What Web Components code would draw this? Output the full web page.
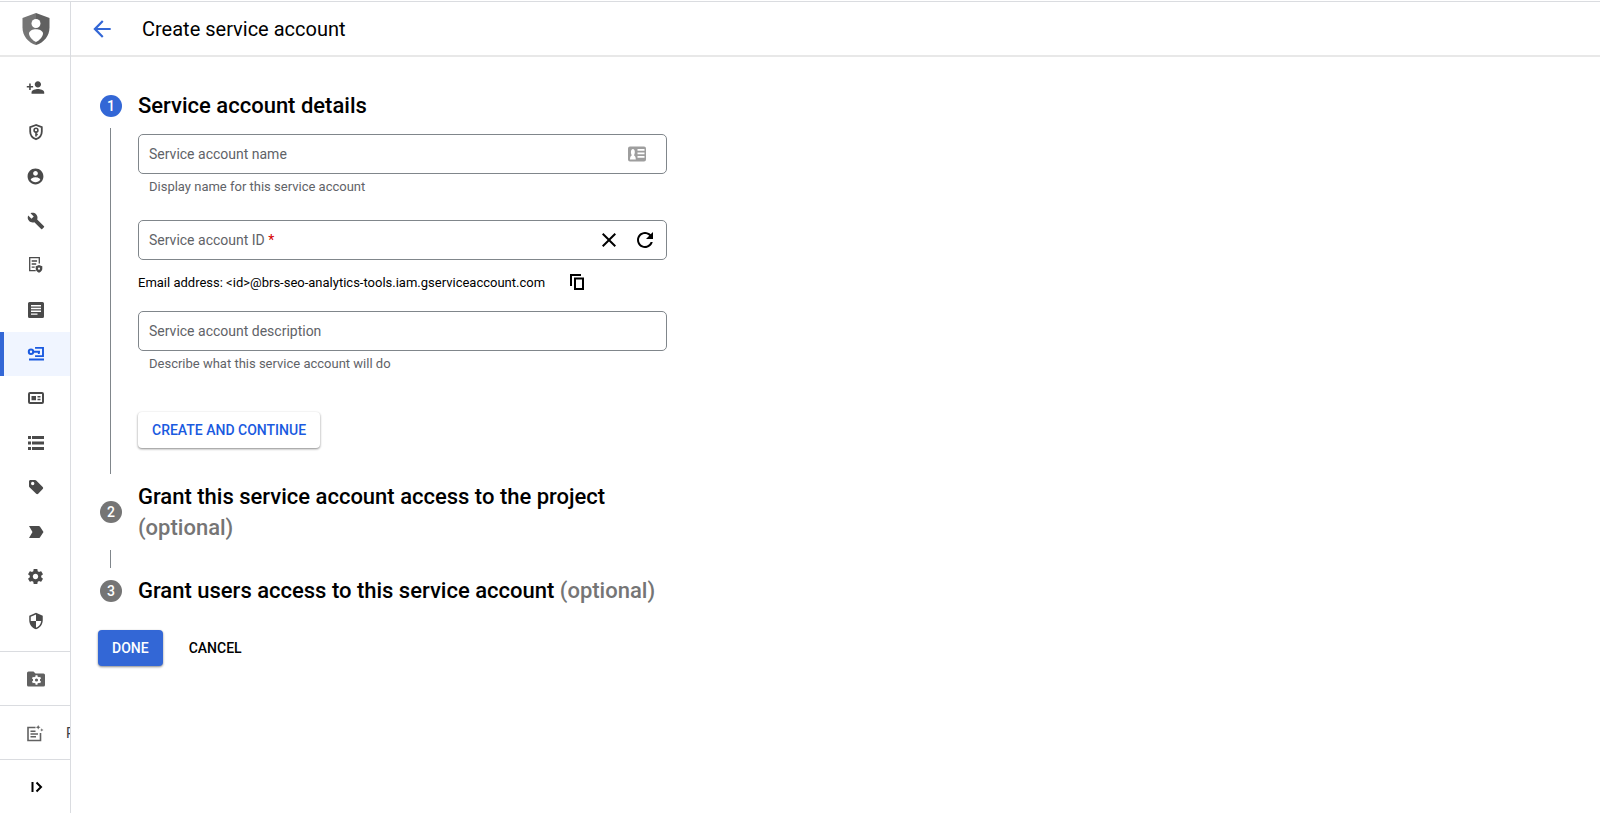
<!DOCTYPE html>
<html lang="en">
<head>
<meta charset="utf-8">
<meta name="viewport" content="width=device-width, initial-scale=1">
<title>Create service account</title>
<style>
  html, body { margin: 0; }
  body { font-family: Roboto, "Liberation Sans", sans-serif; color: #000; background: #fff; }
</style>
</head>
<body>
<iam-app></iam-app>

<script>
const ICONS = {
  product: [32, '0 0 32 32', '<path fill="#757575" d="M16 0 2.500 5v9.500C2.500 23 8 29.500 16 32Z"/><path fill="#616161" d="M16 0l13.500 5v9.500C29.500 23 24 29.500 16 32Z"/><circle cx="16" cy="10.500" r="4.500" fill="#fff"/><path fill="#fff" d="M9 20.500c0-2.700 4-4.200 7-4.200s7 1.500 7 4.200c0 2.500-3.300 7-7 8.500-3.700-1.500-7-6-7-8.500Z"/>'],
  back: [26, '0 0 24 24', '<path d="M20 11H7.830l5.590-5.590L12 4l-8 8 8 8 1.410-1.410L7.830 13H20z"/>'],
  addPerson: [19, '0 0 24 24', '<path d="M15 12c2.210 0 4-1.790 4-4s-1.790-4-4-4-4 1.790-4 4 1.790 4 4 4zm-9-2V7H4v3H1v2h3v3h2v-3h3v-2H6zm9 4c-2.670 0-8 1.340-8 4v2h16v-2c0-2.660-5.330-4-8-4z"/>'],
  shieldKey: [18, '0 0 18 18', '<path fill="none" stroke="currentColor" stroke-width="1.800" d="M9 2 3.200 4.200v4.300c0 3.600 2.300 6.500 5.800 7.700 3.500-1.200 5.800-4.100 5.800-7.700V4.200Z"/><circle cx="9" cy="7.200" r="1.900" fill="none" stroke="currentColor" stroke-width="1.600"/><path fill="none" stroke="currentColor" stroke-width="1.600" d="M9 9v4.500M9 11.500h1.800"/>'],
  account: [19, '0 0 24 24', '<path d="M12 2C6.480 2 2 6.480 2 12s4.480 10 10 10 10-4.480 10-10S17.520 2 12 2zm0 3c1.660 0 3 1.340 3 3s-1.340 3-3 3-3-1.340-3-3 1.340-3 3-3zm0 14.200c-2.500 0-4.710-1.280-6-3.220.03-1.990 4-3.080 6-3.080 1.990 0 5.970 1.090 6 3.080-1.290 1.940-3.500 3.220-6 3.220z"/>'],
  wrench: [18, '0 0 24 24', '<path d="M22.700 19l-9.100-9.100c.9-2.300.4-5-1.500-6.900-2-2-5-2.400-7.400-1.300L9 6 6 9 1.600 4.700C.4 7.100.9 10.100 2.900 12.100c1.900 1.900 4.600 2.400 6.900 1.500l9.100 9.100c.4.4 1 .4 1.400 0l2.300-2.300c.5-.4.5-1.100.1-1.400z"/>'],
  docShield: [18, '0 0 18 18', '<path fill="none" stroke="currentColor" stroke-width="1.300" d="M12.300 7.500V1.700H2.700v13h6M4.700 5h5.400M4.700 8h4.500M4.700 11.200h3"/><path d="m12 9 3.300 1.300v2.300c0 2-1.300 3.500-3.300 4.200-2-.7-3.300-2.200-3.300-4.200v-2.300Z"/><circle cx="12" cy="12.700" r="1.100" fill="#fff"/>'],
  article: [18, '0 0 18 18', '<path fill-rule="evenodd" d="M2.500 1h13A1.500 1.500 0 0 1 17 2.500v13a1.500 1.500 0 0 1-1.500 1.500h-13A1.500 1.500 0 0 1 1 15.500v-13A1.500 1.500 0 0 1 2.500 1ZM4 4v1.500h10V4Zm0 2.800v1.500h10V6.800Zm0 2.800v1.500h10V9.600Zm0 2.800v1.400h6.500v-1.400Z"/>'],
  serviceKey: [18, '0 0 18 18', '<circle cx="4" cy="6.700" r="2.200" fill="none" stroke="currentColor" stroke-width="2"/><path fill="none" stroke="currentColor" stroke-width="1.900" d="M6 6.700h7M11.800 6v3M9 3.700V2.900h7v8.200H9v-.9"/><path d="M2 13.500h15v2H2z"/>'],
  card: [18, '0 0 18 18', '<rect x="2" y="4" width="14" height="10" rx="1" fill="none" stroke="currentColor" stroke-width="2"/><path d="M4.500 7h4.500v4.200H4.500zM10.500 7h3v1.400h-3zM10.500 9.800h3v1.400h-3z"/>'],
  list: [18, '0 0 18 18', '<path d="M1 2h3v3H1zM5 2h12v3H5zM1 7.500h3v3H1zM5 7.500h12v3H5zM1 13h3v3H1zM5 13h12v3H5z"/>'],
  tag: [18, '0 0 18 18', '<path fill-rule="evenodd" d="M2 3.500C2 2.500 2.700 2 3.500 2H8c.5 0 .9.200 1.200.500l6.500 6.500c.6.600.6 1.400 0 2l-4.500 4.700c-.6.600-1.400.6-2 0L2.500 9.300C2.200 9 2 8.600 2 8.200Zm3.700.3a1.700 1.700 0 1 0 0 3.400 1.700 1.700 0 0 0 0-3.400Z"/>'],
  arrowTag: [18, '0 0 18 18', '<path d="M2 3h9.700c.5 0 .9.200 1.200.600L16.500 9l-3.600 5.400c-.3.400-.7.600-1.200.600H2L5.500 9Z"/>'],
  gear: [19, '0 0 24 24', '<path d="M19.140 12.940c.04-.3.06-.61.06-.94 0-.32-.02-.64-.07-.94l2.030-1.580c.18-.14.23-.41.120-.61l-1.920-3.320c-.12-.22-.37-.29-.59-.22l-2.390.96c-.5-.38-1.030-.7-1.620-.94l-.36-2.540c-.04-.24-.24-.41-.48-.41h-3.840c-.24 0-.43.17-.47.41l-.36 2.540c-.59.24-1.130.57-1.620.94l-2.390-.96c-.22-.08-.47 0-.59.22L2.740 8.870c-.12.21-.08.47.12.61l2.030 1.580c-.05.3-.09.63-.09.94s.02.64.07.94l-2.030 1.580c-.18.14-.23.41-.12.61l1.920 3.320c.12.22.37.29.59.22l2.390-.96c.5.38 1.030.7 1.620.94l.36 2.540c.05.24.24.41.48.41h3.840c.24 0 .44-.17.47-.41l.36-2.540c.59-.24 1.130-.56 1.620-.94l2.390.96c.22.08.47 0 .59-.22l1.920-3.320c.12-.22.07-.47-.12-.61l-2.010-1.580zM12 15.400c-1.900 0-3.400-1.500-3.400-3.400s1.500-3.400 3.400-3.400 3.400 1.500 3.400 3.400-1.500 3.400-3.400 3.400z"/>'],
  shieldQuarter: [18, '0 0 24 24', '<path d="M12 1L3 5v6c0 5.550 3.840 10.740 9 12 5.160-1.260 9-6.450 9-12V5l-9-4zm0 10.990h7c-.53 4.120-3.280 7.790-7 8.940V12H5V6.300l7-3.110v8.800z"/>'],
  folderGear: [20, '0 0 20 20', '<path d="M2.500 2.500h5l2 2h8a1.500 1.500 0 0 1 1.500 1.500v10a1.500 1.500 0 0 1-1.500 1.500h-15A1.500 1.500 0 0 1 1 16V4a1.500 1.500 0 0 1 1.500-1.500Z"/><circle cx="10.500" cy="11" r="2.600" fill="none" stroke="#fff" stroke-width="2"/><path stroke="#fff" stroke-width="2" d="M10.500 6.300v2M10.500 13.700v2M6.400 8.700l1.800 1M12.800 12.300l1.800 1M14.600 8.700l-1.800 1M8.200 12.300l-1.800 1"/>'],
  noteSpark: [18, '0 0 18 18', '<path fill="none" stroke="currentColor" stroke-width="1.600" d="M9.500 3.500H2v13h12.500V9M4.500 7.200h5M4.500 10h7.500M4.500 12.800h5.500"/><path d="m12.200 1 .7 1.600 1.600.7-1.600.7-.7 1.600-.7-1.600-1.600-.7 1.600-.7ZM15.800 4.200l.5 1.200 1.200.5-1.200.5-.5 1.200-.5-1.200-1.200-.5 1.200-.5Z"/>'],
  expand: [18, '0 0 18 18', '<path fill="none" stroke="currentColor" stroke-width="2" d="M5.500 4v10M9.500 4.500 14 9l-4.500 4.500"/>'],
  contact: [20, '0 0 20 20', '<path fill-rule="evenodd" d="M3 2.500h14a2 2 0 0 1 2 2v11a2 2 0 0 1-2 2H3a2 2 0 0 1-2-2v-11a2 2 0 0 1 2-2ZM10.500 5v1.700h7V5Zm0 3.500v1.700h7V8.500Zm0 3.500v1.700h7V12ZM3 15.500h5.800c0-3-1-3.800-1.900-4.300 1.500-1.500 1.300-6.200-1-6.200s-2.500 4.700-1 6.200C4 11.700 3 12.500 3 15.500Z"/>'],
  clear: [24, '0 0 24 24', '<path d="M19 6.410L17.590 5 12 10.590 6.410 5 5 6.410 10.590 12 5 17.590 6.410 19 12 13.410 17.590 19 19 17.590 13.410 12z"/>'],
  refresh: [24, '0 0 24 24', '<path d="M17.650 6.350C16.200 4.900 14.210 4 12 4c-4.420 0-7.990 3.580-7.990 8s3.570 8 7.990 8c3.730 0 6.840-2.550 7.730-6h-2.080c-.82 2.330-3.040 4-5.650 4-3.310 0-6-2.690-6-6s2.690-6 6-6c1.660 0 3.140.69 4.220 1.780L13 11h7V4l-2.350 2.350z"/>'],
  copy: [18, '0 0 18 18', '<path fill="none" stroke="currentColor" stroke-width="2" d="M3 13V2h10M7 5.500h8V16H7Z"/>']
};

/* Base class: fills an open shadow root from the markup that render() returns. */
class Base extends HTMLElement {
  constructor() {
    super();
    const t = document.createElement('template');
    t.innerHTML = '<style>*{box-sizing:border-box}</style>' + this.render();
    this.attachShadow({ mode: 'open' }).append(t.content.cloneNode(true));
  }
}

customElements.define('iam-icon', class extends HTMLElement {
  connectedCallback() {
    if (this.shadowRoot) return;
    const [size, box, body] = ICONS[this.getAttribute('name')];
    this.attachShadow({ mode: 'open' }).innerHTML =
      `<style>:host{display:inline-flex;flex:none}svg{display:block;fill:currentColor}</style>
       <svg width="${size}" height="${size}" viewBox="${box}" aria-hidden="true">${body}</svg>`;
  }
});

customElements.define('iam-sidebar', class extends Base {
  render() {
    const items = [['addPerson', 'IAM'], ['shieldKey', 'Privileged access'], ['account', 'Identity'],
      ['wrench', 'Policy troubleshooter'], ['docShield', 'Policy analyzer'], ['article', 'Organization policies'],
      ['serviceKey', 'Service accounts'], ['card', 'Workload identity'], ['list', 'Labels'], ['tag', 'Tags'],
      ['arrowTag', 'Groups'], ['gear', 'Settings'], ['shieldQuarter', 'Privacy']];
    return `
    <style>
      :host { display: flex; flex-direction: column; width: 71px; border-right: 1px solid #dadce0; color: #4a4a4a; overflow: hidden; }
      .brand { height: 55px; padding-left: 1px; display: flex; align-items: center; justify-content: center; border-bottom: 2px solid #e8e8e8; }
      nav { flex: 1; display: grid; grid-auto-rows: minmax(40px, 1fr); padding: 8px 0; }
      a { display: flex; align-items: center; justify-content: center; padding-left: 1px; color: inherit; }
      a.on { background: #f0f5ff; color: #1a5ae0; border-left: 4px solid #3367d6; padding: 0 3px 0 0; }
      .foot { height: 54px; display: flex; align-items: center; justify-content: flex-start; gap: 22px; padding: 0 0 0 26px; border-top: 1px solid #dadce0; color: #616161; font-size: 14px; text-decoration: none; white-space: nowrap; }
      .foot span { color: #3c4043; }
      button { width: 100%; border: 0; background: none; font: inherit; }
      button.foot { padding-left: 27px; color: #000; }
    </style>
    <div class="brand"><iam-icon name="product"></iam-icon></div>
    <nav aria-label="IAM and admin">${items.map(([i, l]) =>
      `<a href="#" aria-label="${l}"${i === 'serviceKey' ? ' class="on" aria-current="page"' : ''}><iam-icon name="${i}"></iam-icon></a>`).join('')}</nav>
    <a class="foot" href="#" aria-label="Manage resources"><iam-icon name="folderGear"></iam-icon></a>
    <a class="foot" href="#"><iam-icon name="noteSpark"></iam-icon><span>Release Notes</span></a>
    <button class="foot" type="button" aria-label="Expand navigation"><iam-icon name="expand"></iam-icon></button>`;
  }
});

customElements.define('iam-titlebar', class extends Base {
  render() {
    return `
    <style>
      :host { display: flex; box-sizing: border-box; align-items: center; height: 55px; padding-left: 18px; gap: 27px; border-bottom: 2px solid #e8e8e8; }
      a { display: flex; color: #3367d6; }
      h1 { margin: 0; font-size: 20px; line-height: 28px; font-weight: 400; }
    </style>
    <a href="#" aria-label="Back"><iam-icon name="back"></iam-icon></a>
    <h1><slot></slot></h1>`;
  }
});

/* Outlined text field: label and input share one grid cell. */
customElements.define('iam-field', class extends Base {
  render() {
    const hint = this.getAttribute('hint');
    return `
    <style>
      :host { display: block; }
      .box { display: grid; grid-template-columns: 1fr auto; align-items: center; height: 40px; border: 1px solid #80868b; border-radius: 5px; }
      label { grid-area: 1 / 1; padding-left: 10px; font-size: 14px; line-height: 20px; color: #5f6368; pointer-events: none; }
      label b { color: #d50000; font-weight: 400; }
      input { grid-area: 1 / 1 / 2 / 3; width: 100%; height: 100%; border: 0; padding: 0 10px; background: none; font: inherit; font-size: 14px; outline: none; }
      slot { grid-area: 1 / 2; display: flex; align-items: center; }
      p { margin: 4px 0 0; padding-left: 11px; font-size: 13px; line-height: 17px; color: #5f6368; }
    </style>
    <div class="box"><input id="f" type="text"><label for="f">${this.getAttribute('label')}${this.hasAttribute('required') ? ' <b>*</b>' : ''}</label><slot></slot></div>
    ${hint ? `<p>${hint}</p>` : ''}`;
  }
});

customElements.define('iam-icon-button', class extends Base {
  render() {
    return `
    <style>
      :host { display: inline-flex; }
      button { display: flex; padding: 0; border: 0; background: none; color: inherit; cursor: pointer; }
    </style>
    <button type="button" aria-label="${this.getAttribute('label')}"><slot></slot></button>`;
  }
});

customElements.define('iam-button', class extends Base {
  render() {
    return `
    <style>
      :host { display: inline-flex; }
      button { height: 36px; padding: 0 14px; border: 0; border-radius: 4px; background: none; color: #000; font: 500 14px/20px Roboto, "Liberation Sans", sans-serif; white-space: nowrap; cursor: pointer; }
      :host([kind]) button { box-shadow: 0 1px 2px rgba(0,0,0,.3), 0 1px 3px rgba(0,0,0,.2); }
      :host([kind="raised"]) button { background: #fff; color: #1a5ae0; }
      :host([kind="primary"]) button { background: #3367d6; color: #fff; }
    </style>
    <button type="button"><slot></slot></button>`;
  }
});

/* One numbered step; every step but the last draws a connector below its badge. */
customElements.define('iam-step', class extends Base {
  render() {
    return `
    <style>
      :host { display: grid; grid-template-columns: 22px minmax(0, 1fr); column-gap: 16px; }
      .badge { align-self: center; width: 22px; height: 22px; border-radius: 50%; background: #757575; color: #fff; font-size: 14px; line-height: 22px; font-weight: 500; text-align: center; }
      :host([current]) .badge { background: #3367d6; }
      h2 { margin: 0; font-size: 22px; line-height: 31px; font-weight: 500; }
      .line { width: 1px; min-height: 18px; margin: 7px 0 7px 10px; background: #80868b; }
      :host([last]) .line { display: none; }
      ::slotted([slot="note"]) { color: #757575; }
    </style>
    <div class="badge">${this.getAttribute('number')}</div>
    <h2><slot name="title"></slot> <slot name="note"></slot></h2>
    <div class="line"></div>
    <div><slot></slot></div>`;
  }
});

customElements.define('iam-details', class extends Base {
  render() {
    return `
    <style>
      :host { display: flex; flex-direction: column; padding: 13px 0 33px; }
      .gap { margin-top: 25px; }
      .name { color: #9e9e9e; padding-right: 19px; }
      .id { display: flex; gap: 12px; padding-right: 9px; }
      .email { display: flex; align-items: center; gap: 23px; height: 24px; margin: 10px 0 17px; font-size: 13px; line-height: 17px; }
      .create { margin-top: 40px; }
    </style>
    <iam-field label="Service account name" hint="Display name for this service account"><iam-icon class="name" name="contact"></iam-icon></iam-field>
    <iam-field class="gap" label="Service account ID" required>
      <div class="id">
        <iam-icon-button label="Clear"><iam-icon name="clear"></iam-icon></iam-icon-button>
        <iam-icon-button label="Generate ID"><iam-icon name="refresh"></iam-icon></iam-icon-button>
      </div>
    </iam-field>
    <div class="email"><span>Email address: &lt;id&gt;@brs-seo-analytics-tools.iam.gserviceaccount.com</span>
      <iam-icon-button label="Copy email address"><iam-icon name="copy"></iam-icon></iam-icon-button></div>
    <iam-field label="Service account description" hint="Describe what this service account will do"></iam-field>
    <iam-button class="create" kind="raised">CREATE AND CONTINUE</iam-button>`;
  }
});

customElements.define('iam-app', class extends Base {
  render() {
    return `
    <style>
      :host { display: flex; flex-direction: column; min-height: 100vh; padding-top: 1px; box-sizing: border-box; }
      .shell { flex: 1; display: grid; grid-template-columns: auto minmax(0, 1fr); border-top: 1px solid #dadce0; }
      main { max-width: 596px; padding: 33px 0 0 29px; }
      .actions { display: flex; gap: 12px; margin: 24px 0 0 -2px; }
    </style>
    <div class="shell">
      <iam-sidebar></iam-sidebar>
      <div>
        <iam-titlebar>Create service account</iam-titlebar>
        <main>
          <iam-step number="1" current><span slot="title">Service account details</span><iam-details></iam-details></iam-step>
          <iam-step number="2"><span slot="title">Grant this service account access to the project</span><span slot="note">(optional)</span></iam-step>
          <iam-step number="3" last><span slot="title">Grant users access to this service account</span><span slot="note">(optional)</span></iam-step>
          <div class="actions"><iam-button kind="primary">DONE</iam-button><iam-button>CANCEL</iam-button></div>
        </main>
      </div>
    </div>`;
  }
});
</script>
</body>
</html>
